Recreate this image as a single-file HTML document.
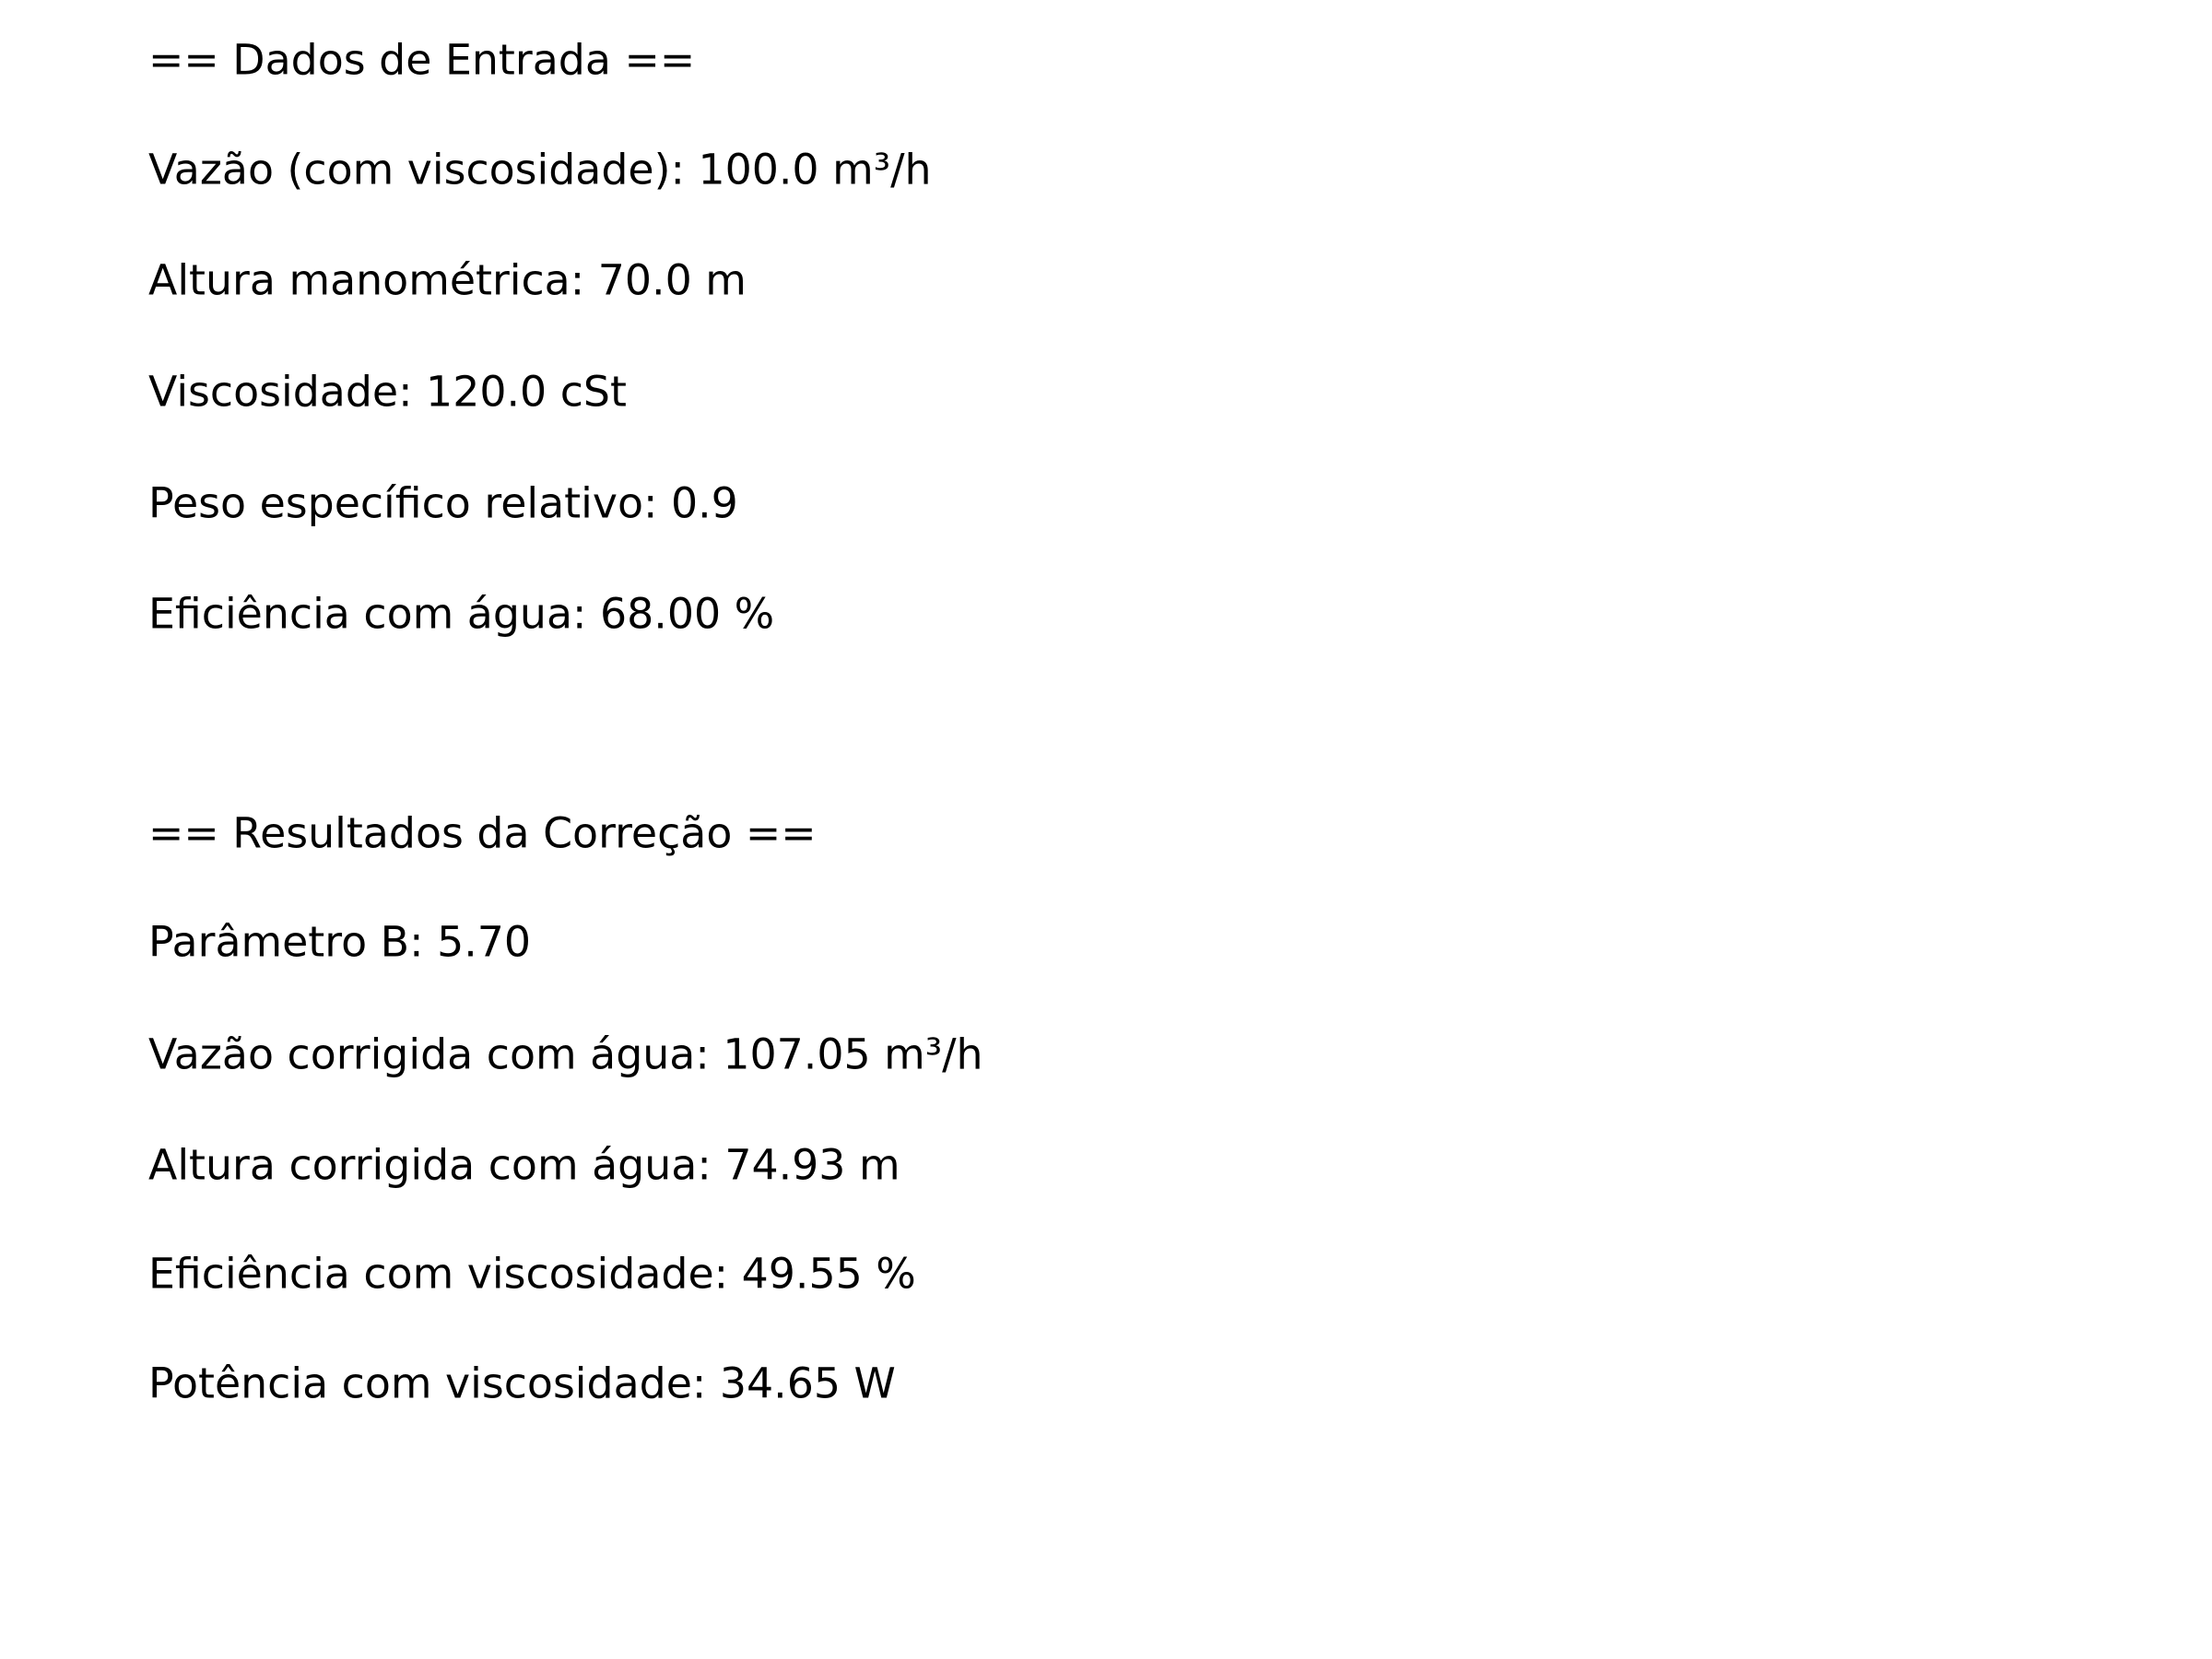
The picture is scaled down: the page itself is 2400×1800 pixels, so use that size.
<!DOCTYPE html>
<html><head><meta charset="utf-8"><style>
html,body{margin:0;padding:0;background:#fff;width:2400px;height:1800px;overflow:hidden}
svg text{font-family:"DejaVu Sans","Liberation Sans",sans-serif;font-size:45.8px;fill:#000}
</style></head><body>
<svg width="2400" height="1800" xmlns="http://www.w3.org/2000/svg">
<g transform="translate(0,-1.5)">
<text x="161" y="82">== Dados de Entrada ==</text>
<text x="161" y="201">Vazão (com viscosidade): 100.0 m³/h</text>
<text x="161" y="321">Altura manométrica: 70.0 m</text>
<text x="161" y="442">Viscosidade: 120.0 cSt</text>
<text x="161" y="563">Peso específico relativo: 0.9</text>
<text x="161" y="683">Eficiência com água: 68.00 %</text>
<text x="161" y="921">== Resultados da Correção ==</text>
<text x="161" y="1039">Parâmetro B: 5.70</text>
<text x="161" y="1161">Vazão corrigida com água: 107.05 m³/h</text>
<text x="161" y="1281">Altura corrigida com água: 74.93 m</text>
<text x="161" y="1399">Eficiência com viscosidade: 49.55 %</text>
<text x="161" y="1518">Potência com viscosidade: 34.65 W</text>
</g>
</svg>
</body></html>
